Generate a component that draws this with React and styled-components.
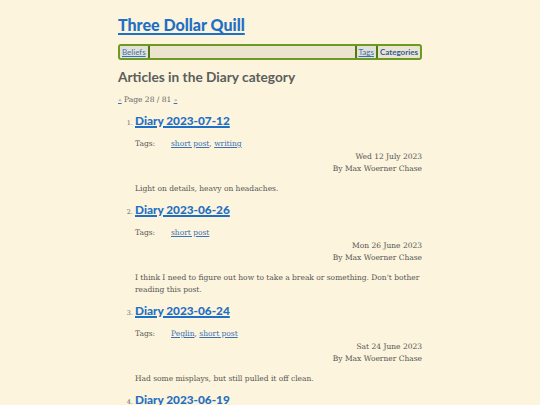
import styled, { createGlobalStyle } from "styled-components";

const GlobalStyle = createGlobalStyle`
  html, body { margin: 0; padding: 0; background: #fcf4dc; }
  body { font-family: "DejaVu Serif", serif; color: #555; }
`;

const Page = styled.div`
  width: 304px;
  margin: 0 auto;
  padding-top: 14px;
`;

const SiteTitle = styled.h1`
  margin: 0;
  font-family: Lato, sans-serif;
  font-size: 16px;
  line-height: 22px;
  font-weight: 900;
  a { color: #1f6fc5; text-decoration-thickness: 2px; text-underline-offset: 2px; }
`;

const Nav = styled.nav`
  display: flex;
  align-items: stretch;
  margin-top: 8px;
  height: 12px;
  border: 2px solid #6c9a22;
  border-radius: 3px;
  background: #ece4cf;
  font-family: Lato, sans-serif;
  font-size: 8px;
  line-height: 12px;
`;

const NavLink = styled.a`
  padding: 0 2px;
  color: ${(p) => (p.$active ? "#2c5e9e" : "#3a72b8")};
  font-weight: ${(p) => (p.$active ? 700 : 400)};
  text-decoration: ${(p) => (p.$active ? "none" : "underline")};
  background: ${(p) => (p.$active ? "transparent" : "#e3e0d5")};
`;

const Sep = styled.span`
  width: 2px;
  background: #4d7a14;
`;

const Spacer = styled.span`
  flex: 1;
`;

const Heading = styled.h2`
  margin: 9px 0 0;
  font-family: Lato, sans-serif;
  font-size: 13.7px;
  line-height: 16px;
  font-weight: 700;
  color: #5b5e5c;
`;

const Pager = styled.p`
  margin: 10px 0 0;
  font-size: 7.5px;
  line-height: 10px;
  color: #666;
  a { color: #3a72b8; font-size: 6px; }
`;

const List = styled.ol`
  margin: 8px 0 0;
  padding-left: 17px;
  list-style: decimal;
  li::marker { font-size: 6.5px; color: #666; }
`;

const Item = styled.li`
  margin-bottom: 7px;
`;

const ItemTitle = styled.h3`
  margin: 0;
  font-family: Lato, sans-serif;
  font-size: 11.8px;
  line-height: 16px;
  font-weight: 900;
  a { color: #1f6fc5; text-decoration-thickness: 1.5px; text-underline-offset: 1px; }
`;

const TagsRow = styled.div`
  display: flex;
  margin-top: 10px;
  font-size: 7.5px;
  line-height: 10px;
`;

const TagsLabel = styled.span`
  width: 36px;
`;

const TagLink = styled.a`
  color: #3a72b8;
`;

const Meta = styled.div`
  margin-top: 2px;
  text-align: right;
  font-size: 7.5px;
  line-height: 12px;
`;

const Summary = styled.p`
  margin: 8px 0 0;
  font-size: 7.5px;
  line-height: 12px;
`;

const articles = [
  {
    title: "Diary 2023-07-12",
    tags: ["short post", "writing"],
    date: "Wed 12 July 2023",
    summary: "Light on details, heavy on headaches.",
  },
  {
    title: "Diary 2023-06-26",
    tags: ["short post"],
    date: "Mon 26 June 2023",
    summary:
      "I think I need to figure out how to take a break or something. Don't bother reading this post.",
  },
  {
    title: "Diary 2023-06-24",
    tags: ["Peglin", "short post"],
    date: "Sat 24 June 2023",
    summary: "Had some misplays, but still pulled it off clean.",
  },
  {
    title: "Diary 2023-06-19",
    tags: ["short post"],
    date: "Mon 19 June 2023",
    summary: "",
  },
];

export default function App() {
  return (
    <>
      <GlobalStyle />
      <Page>
        <SiteTitle>
          <a href="#">Three Dollar Quill</a>
        </SiteTitle>
        <Nav>
          <NavLink href="#">Beliefs</NavLink>
          <Sep />
          <Spacer />
          <Sep />
          <NavLink href="#">Tags</NavLink>
          <Sep />
          <NavLink href="#" $active>Categories</NavLink>
        </Nav>
        <Heading>Articles in the Diary category</Heading>
        <Pager>
          <a href="#">«</a> Page 28 / 81 <a href="#">»</a>
        </Pager>
        <List>
          {articles.map((a) => (
            <Item key={a.title}>
              <ItemTitle>
                <a href="#">{a.title}</a>
              </ItemTitle>
              <TagsRow>
                <TagsLabel>Tags:</TagsLabel>
                <span>
                  {a.tags.map((t, i) => (
                    <span key={t}>
                      {i > 0 && ", "}
                      <TagLink href="#">{t}</TagLink>
                    </span>
                  ))}
                </span>
              </TagsRow>
              <Meta>
                {a.date}
                <br />
                By Max Woerner Chase
              </Meta>
              {a.summary && <Summary>{a.summary}</Summary>}
            </Item>
          ))}
        </List>
      </Page>
    </>
  );
}
